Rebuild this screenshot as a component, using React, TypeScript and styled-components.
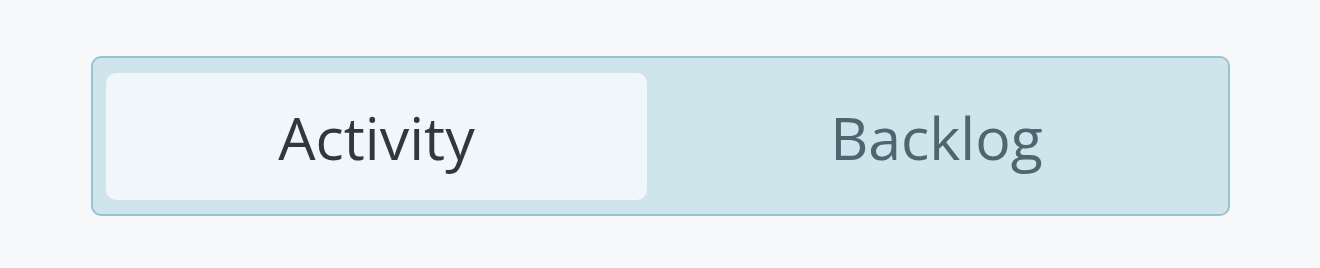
import React, { useState } from "react";
import styled, { createGlobalStyle } from "styled-components";

const Global = createGlobalStyle`
  html, body { margin: 0; padding: 0; background: #f7f8f9; }
  body { font-family: "Open Sans", "Noto Sans", sans-serif; }
`;

const Page = styled.div`
  width: 1320px;
  height: 268px;
  display: flex;
  justify-content: center;
  padding-top: 56px;
  box-sizing: border-box;
`;

const Segmented = styled.div`
  box-sizing: border-box;
  width: 1139px;
  height: 160px;
  margin-left: 1px;
  border: 2px solid #9ac3d1;
  border-radius: 10px;
  background: #cee5ec;
  padding: 15px 21px 14px 13px;
  display: grid;
  grid-template-columns: 541px 541px;
  column-gap: 19px;
`;

const Segment = styled.button<{ $active: boolean }>`
  border: none;
  margin: 0;
  padding: 0;
  border-radius: 10px;
  background: ${(p) => (p.$active ? "#f0f6fa" : "transparent")};
  color: ${(p) => (p.$active ? "#2e383e" : "#4f6570")};
  font-family: "Open Sans", "Noto Sans", sans-serif;
  font-size: 59px;
  font-weight: 400;
  display: flex;
  align-items: center;
  justify-content: center;
  cursor: pointer;
`;

export default function App() {
  const [active, setActive] = useState(0);
  const tabs = ["Activity", "Backlog"];
  return (
    <>
      <Global />
      <Page>
        <Segmented>
          {tabs.map((t, i) => (
            <Segment key={t} $active={active === i} onClick={() => setActive(i)}>
              {t}
            </Segment>
          ))}
        </Segmented>
      </Page>
    </>
  );
}
